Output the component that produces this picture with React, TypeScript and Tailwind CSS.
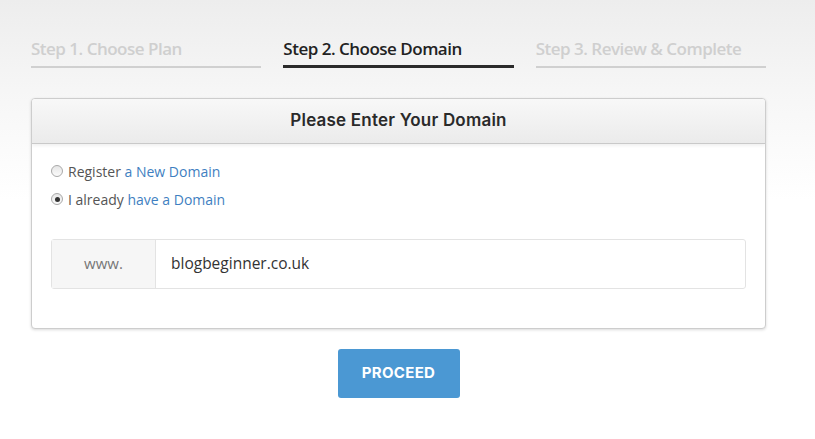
import { useState } from 'react'

const steps = [
  { label: 'Step 1. Choose Plan', active: false },
  { label: 'Step 2. Choose Domain', active: true },
  { label: 'Step 3. Review & Complete', active: false },
]

function Radio({ checked }: { checked: boolean }) {
  return (
    <span className="flex size-[12px] items-center justify-center rounded-full border border-[#a9a9a9] bg-gradient-to-b from-[#e6e6e6] to-[#fbfbfb]">
      {checked && <span className="size-[5px] rounded-full bg-[#333]" />}
    </span>
  )
}

export default function App() {
  const [choice, setChoice] = useState<'new' | 'have'>('have')

  return (
    <div className="min-h-[439px] w-full bg-[linear-gradient(to_bottom,#ededed_0px,#f6f6f6_90px,#ffffff_200px)] font-['Open_Sans',sans-serif]">
      <div className="ml-[31px] flex w-[735px] flex-col pt-[36px]">
        <div className="grid grid-cols-3 gap-[22px]">
          {steps.map(step => (
            <div
              key={step.label}
              className={
                step.active
                  ? 'border-b-[3px] border-[#2b2b2b] pb-[3px] text-[17px] font-semibold tracking-[-0.5px] text-[#222]'
                  : 'border-b-2 border-[#d0d0d0] pb-[4px] text-[17px] font-semibold tracking-[-0.5px] text-[#cfcfcf]'
              }
            >
              {step.label}
            </div>
          ))}
        </div>

        <div className="mt-[30px] overflow-hidden rounded-[4px] border border-[#cdcdcd] bg-white shadow-[0_1px_3px_rgba(0,0,0,0.15)]">
          <div className="flex h-[45px] items-center justify-center border-b border-[#c9c9c9] bg-gradient-to-b from-[#f8f8f8] to-[#ebebeb] font-['Inter',sans-serif] text-[17px] font-semibold tracking-[0.2px] text-[#2a2a2a] shadow-[0_2px_3px_rgba(0,0,0,0.06)]">
            Please Enter Your Domain
          </div>

          <div className="px-[19px] pt-[17px] pb-[39px]">
            <div className="flex flex-col gap-[7px] text-[14px] text-[#555]">
              <label className="flex cursor-pointer items-center gap-[5px]" onClick={() => setChoice('new')}>
                <Radio checked={choice === 'new'} />
                <span>
                  Register <span className="text-[#3f7fc1]">a New Domain</span>
                </span>
              </label>
              <label className="flex cursor-pointer items-center gap-[5px]" onClick={() => setChoice('have')}>
                <Radio checked={choice === 'have'} />
                <span>
                  I already <span className="text-[#3f7fc1]">have a Domain</span>
                </span>
              </label>
            </div>

            <div className="mt-[29px] flex h-[50px] rounded-[3px] border border-[#e3e3e3]">
              <div className="flex w-[104px] items-center justify-center border-r border-[#e3e3e3] bg-[#f6f6f6] text-[15px] text-[#777]">
                www.
              </div>
              <div className="flex flex-1 items-center pl-[15px] text-[15.5px] text-[#333]">
                blogbeginner.co.uk
              </div>
            </div>
          </div>
        </div>

        <div className="mt-[20px] flex justify-center">
          <button className="h-[49px] w-[122px] rounded-[3px] bg-[#4b98d3] font-['Inter',sans-serif] text-[15px] font-bold tracking-[0.3px] text-white">
            PROCEED
          </button>
        </div>
      </div>
    </div>
  )
}
